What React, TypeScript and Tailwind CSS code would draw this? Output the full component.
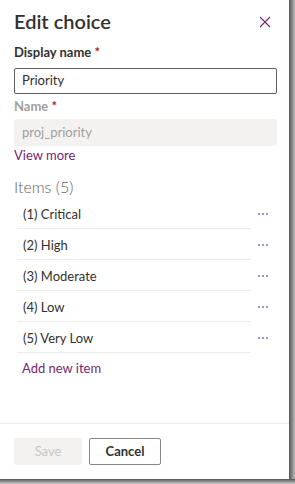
import React from 'react';

const ITEMS = ['(1) Critical', '(2) High', '(3) Moderate', '(4) Low', '(5) Very Low'];

export default function App() {
  return (
    <div className="w-[295px] h-[484px] bg-white flex flex-col" style={{ fontFamily: '"Segoe UI", Lato, sans-serif' }}>
      <div className="flex flex-1 min-h-0">
        <div className="w-[289px] flex flex-col bg-white">
          {/* header */}
          <div className="flex items-center justify-between pl-[14px] pr-[18px] h-[44px] pb-[2px]">
            <h2 className="text-[20px] font-semibold text-[#323130] leading-[24px]">Edit choice</h2>
            <svg width="12" height="12" viewBox="0 0 12 12" className="text-[#742774] mt-[2px]">
              <path d="M1 1 L11 11 M11 1 L1 11" stroke="currentColor" strokeWidth="1.1" fill="none" />
            </svg>
          </div>

          <div className="px-[14px] flex flex-col flex-1">
            <label className="mt-[-3px] pt-[2px] text-[13px] font-bold text-[#323130] leading-[18px]">
              Display name <span className="text-[#a4262c]">*</span>
            </label>
            <div className="mt-[7px] h-[26px] w-[263px] border border-[#605e5c] rounded-[2px] flex items-center px-[7px] text-[13px] text-[#323130]">
              Priority
            </div>
            <label className="mt-[1px] pt-[2px] text-[13px] font-bold text-[#a19f9d] leading-[18px]">
              Name <span className="text-[#a4262c]">*</span>
            </label>
            <div className="mt-[4px] h-[27px] w-[263px] bg-[#f3f2f1] rounded-[2px] flex items-center px-[8px] text-[13px] text-[#a19f9d]">
              proj_priority
            </div>
            <a className="text-[13px] text-[#742774] leading-[18px]">View more</a>

            <div className="mt-[13px] text-[16px] font-light text-[#605e5c] leading-[20px]">Items (5)</div>

            <div className="mt-[1px] flex flex-col">
              {ITEMS.map((it) => (
                <div key={it} className="flex items-center h-[31px]">
                  <div className="w-[234px] ml-[3px] h-full flex items-center border-b border-[#edebe9] pl-[6px] pt-[3px] text-[13px] text-[#323130]">
                    {it}
                  </div>
                  <div className="ml-[7px] flex gap-[2px] items-center">
                    <span className="w-[2px] h-[2px] bg-[#8a6fb0] rounded-full" />
                    <span className="w-[2px] h-[2px] bg-[#8a6fb0] rounded-full" />
                    <span className="w-[2px] h-[2px] bg-[#8a6fb0] rounded-full" />
                  </div>
                </div>
              ))}
            </div>
            <a className="mt-[6px] ml-[8px] text-[13px] text-[#742774] leading-[18px]">Add new item</a>
          </div>

          <div className="border-t border-[#edebe9] h-[56px] flex items-center gap-[7px] px-[14px]">
            <button className="w-[68px] h-[27px] bg-[#f3f2f1] rounded-[2px] text-[13px] text-[#c8c6c4]">Save</button>
            <button className="w-[72px] h-[27px] border border-[#8a8886] rounded-[2px] text-[13px] font-bold text-[#323130]">Cancel</button>
          </div>
        </div>
        <div className="w-[6px] bg-gradient-to-r from-[#555] to-[#bbb]" />
      </div>
      <div className="h-[5px] bg-gradient-to-b from-[#555] to-[#ccc]" />
    </div>
  );
}
